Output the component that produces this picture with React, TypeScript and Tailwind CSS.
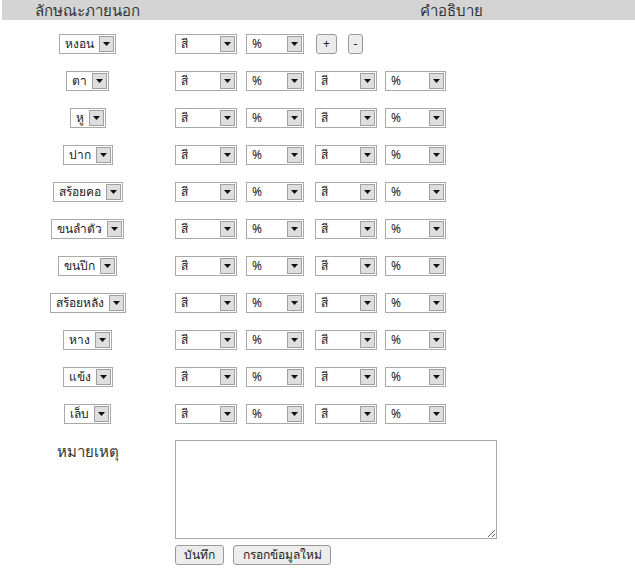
import React from "react";

const font = { fontFamily: '"Noto Sans", "DejaVu Sans", sans-serif' };

function Arrow() {
  return (
    <span className="flex w-[15px] my-[1px] mr-[1px] items-center justify-center bg-[#dedede] border border-[#a0a0a0]">
      <svg width="7" height="4" viewBox="0 0 7 4">
        <polygon points="0,0 7,0 3.5,4" fill="#111" />
      </svg>
    </span>
  );
}

function Sel({ text, w }: { text: string; w?: string }) {
  return (
    <div
      className={`flex h-[20px] items-stretch border border-[#a9a9a9] bg-white ${w ?? ""}`}
    >
      <span className="flex flex-1 items-center px-[5px] text-[12px] leading-none text-[#222] whitespace-nowrap">
        {text}
      </span>
      <Arrow />
    </div>
  );
}

const labels = [
  "หงอน",
  "ตา",
  "หู",
  "ปาก",
  "สร้อยคอ",
  "ขนลำตัว",
  "ขนปีก",
  "สร้อยหลัง",
  "หาง",
  "แข้ง",
  "เล็บ",
];

function Btn({ children, w }: { children: React.ReactNode; w: string }) {
  return (
    <div
      className={`flex h-[20px] ${w} items-center justify-center rounded-[3px] border border-[#9a9a9a] bg-[#ececec] text-[12px] leading-none text-[#222]`}
    >
      {children}
    </div>
  );
}

export default function App() {
  return (
    <div className="w-[635px] h-[575px] bg-white overflow-hidden text-[#222]" style={font}>
      <div className="ml-[2px] flex h-[20px] bg-[#d4d4d4] text-[15px] leading-[20px] text-[#333] overflow-hidden">
        <div className="w-[171px] shrink-0 text-center">ลักษณะภายนอก</div>
        <div className="w-[556px] shrink-0 text-center">คำอธิบาย</div>
      </div>
      <div className="pt-[5px] pl-[2px]">
        {labels.map((l, i) => (
          <div key={l} className="flex h-[37px] items-center">
            <div className="w-[171px] flex justify-center">
              <Sel text={l} />
            </div>
            <div className="flex items-center pl-[2px]">
              <Sel text="สี" w="w-[62px]" />
              <div className="ml-[9px] flex">
                <Sel text="%" w="w-[58px]" />
              </div>
              {i === 0 ? (
                <>
                  <div className="ml-[12px] flex">
                    <Btn w="w-[21px]">+</Btn>
                  </div>
                  <div className="ml-[11px] flex">
                    <Btn w="w-[15px]">-</Btn>
                  </div>
                </>
              ) : (
                <>
                  <div className="ml-[11px] flex">
                    <Sel text="สี" w="w-[62px]" />
                  </div>
                  <div className="ml-[8px] flex">
                    <Sel text="%" w="w-[61px]" />
                  </div>
                </>
              )}
            </div>
          </div>
        ))}
        <div className="mt-[8px] flex">
          <div className="w-[171px] flex justify-center pt-[1px]">
            <span className="text-[15px] leading-[20px] text-[#333]">หมายเหตุ</span>
          </div>
          <div className="pl-[2px] flex flex-col">
            <textarea
              className="w-[322px] h-[99px] border border-[#a9a9a9] bg-white resize-y outline-none"
              readOnly
            />
            <div className="mt-[6px] flex gap-[9px]">
              <Btn w="w-[49px]">บันทึก</Btn>
              <Btn w="w-[98px]">กรอกข้อมูลใหม่</Btn>
            </div>
          </div>
        </div>
      </div>
    </div>
  );
}
